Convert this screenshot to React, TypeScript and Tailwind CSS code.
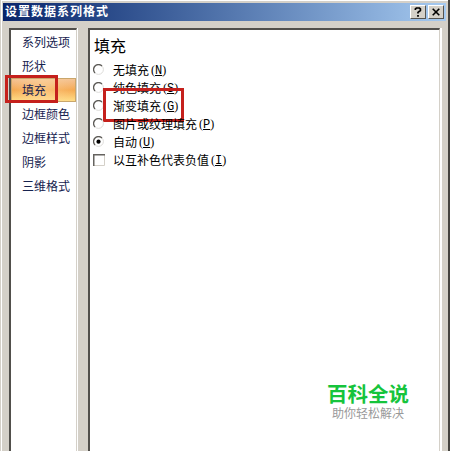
import React from 'react';
import clsx from 'clsx';

const tabs = ['系列选项', '形状', '填充', '边框颜色', '边框样式', '阴影', '三维格式'];

interface FillOption {
    label: string;
    accessKey: string;
    type: 'radio' | 'checkbox';
    checked?: boolean;
    marked?: boolean;
}

const fillOptions: FillOption[] = [
    { label: '无填充', accessKey: 'N', type: 'radio' },
    { label: '纯色填充', accessKey: 'S', type: 'radio' },
    { label: '渐变填充', accessKey: 'G', type: 'radio', marked: true },
    { label: '图片或纹理填充', accessKey: 'P', type: 'radio' },
    { label: '自动', accessKey: 'U', type: 'radio', checked: true },
    { label: '以互补色代表负值', accessKey: 'I', type: 'checkbox' },
];

const RadioIcon: React.FC<{ checked?: boolean }> = ({ checked }) => (
    <svg width="12" height="12" viewBox="0 0 12 12" fill="none">
        <circle cx="5.5" cy="5.5" r="4.9" fill="#fff" stroke="#deddda" />
        <path d="M2 9A4.9 4.9 0 0 1 9 2" stroke="#5c5a56" strokeWidth="1.3" />
        {checked && <circle cx="5.5" cy="5.7" r="2.1" fill="#000" />}
    </svg>
);

const CheckboxIcon: React.FC = () => (
    <svg width="12" height="12" viewBox="0 0 12 12" fill="none">
        <path d="M11.5 0v11.5H0" stroke="#d4d0c8" />
        <path d="M.75 12V.75H12" stroke="#65635f" strokeWidth="1.5" />
    </svg>
);

const TitleButton: React.FC<{ children: React.ReactNode }> = ({ children }) => (
    <button className="flex h-[14px] w-4 items-center justify-center border border-t-white border-l-white border-r-[#55534f] border-b-[#55534f] bg-[#d4d0c8]">
        {children}
    </button>
);

const TitleBar: React.FC = () => (
    <header className="flex h-[18px] items-center bg-linear-to-r from-[#0a246a] to-[#a6caf0] pr-0.5 pl-0.5">
        <h1 className="flex-1 text-[12px] leading-[18px] font-bold tracking-[1px] text-white">设置数据系列格式</h1>
        <div className="flex gap-0.5">
            <TitleButton>
                <svg width="8" height="10" viewBox="0 0 8 10" fill="none">
                    <path d="M1.4 3V1.8L2.4 1h3l1 .9v1.6L4 5.3v1.2" stroke="#000" strokeWidth="1.7" />
                    <path d="M3.1 8h1.8v1.7H3.1z" fill="#000" />
                </svg>
            </TitleButton>
            <TitleButton>
                <svg width="8" height="8" viewBox="0 0 8 8" fill="none">
                    <path d="M.7.7l6.6 6.6M7.3.7L.7 7.3" stroke="#000" strokeWidth="1.6" />
                </svg>
            </TitleButton>
        </div>
    </header>
);

const Sidebar: React.FC = () => (
    <nav className="w-[68px] border-t-2 border-r border-l-2 border-t-[#514f4b] border-r-[#d4d0c8] border-l-[#514f4b] bg-white">
        {tabs.map(tab => {
            const active = tab === '填充';
            return (
                <div
                    key={tab}
                    className={clsx(
                        'relative flex h-6 items-center pt-px pl-[11px] text-[12px] whitespace-nowrap text-[#17234f]',
                        active && 'bg-linear-to-b from-[#f3c59b] via-[#f5a950] to-[#ffe28a]'
                    )}
                >
                    {active && <div className="absolute inset-0 border border-[#c9a66b] bg-linear-to-r from-transparent via-[#ffd9a0]/50 to-transparent" />}
                    <span className="relative">{tab}</span>
                    {active && <div className="absolute -top-[3px] -left-[6px] h-[28px] w-[53px] border-[3px] border-[#c5201c]" />}
                </div>
            );
        })}
    </nav>
);

const FillPanel: React.FC = () => (
    <main className="relative flex-1 border-t-2 border-r border-l-2 border-t-[#514f4b] border-r-[#d4d0c8] border-l-[#514f4b] bg-white pt-[5px] pl-[3px]">
        <h2 className="h-[26px] pl-px text-[16px] leading-[24px] text-black">填充</h2>
        {fillOptions.map(option => (
            <label key={option.accessKey} className="relative flex h-[18px] items-center text-[12px] whitespace-nowrap text-black">
                {option.type === 'radio' ? <RadioIcon checked={option.checked} /> : <CheckboxIcon />}
                <span className="ml-2 pt-px">{option.label}</span>
                <span className="ml-[2px] font-['Liberation_Serif'] text-[12px] leading-[14px]">
                    (<u className="font-['Liberation_Mono']">{option.accessKey}</u>)
                </span>
                {option.marked && <span className="absolute -top-[9px] left-[10px] h-[34px] w-[81px] border-[3px] border-[#c5201c]" />}
            </label>
        ))}
        <div className="absolute right-[30px] bottom-[30px] flex flex-col items-center whitespace-nowrap">
            <strong className="text-[20.5px] leading-6 font-bold text-[#16c43c]">百科全说</strong>
            <span className="text-[12px] leading-[14px] text-[#999]">助你轻松解决</span>
        </div>
    </main>
);

export default function App() {
    return (
        <div className="flex h-[451px] w-[450px] flex-col overflow-hidden border-r-2 border-l border-r-[#45433f] border-l-[#d4d0c8] bg-[#d4d0c8] font-['Liberation_Sans','Noto_Sans_CJK_SC',sans-serif]">
            <div className="flex min-h-0 flex-1 flex-col border-t border-l border-white pt-0.5 pr-0.5 pl-px">
                <TitleBar />
                <div className="mt-[7px] flex min-h-0 flex-1 pr-1 pl-[6px]">
                    <div className="flex border-r border-white">
                        <Sidebar />
                    </div>
                    <div className="ml-[10px] flex flex-1 border-r-2 border-white">
                        <FillPanel />
                    </div>
                </div>
            </div>
        </div>
    );
}
